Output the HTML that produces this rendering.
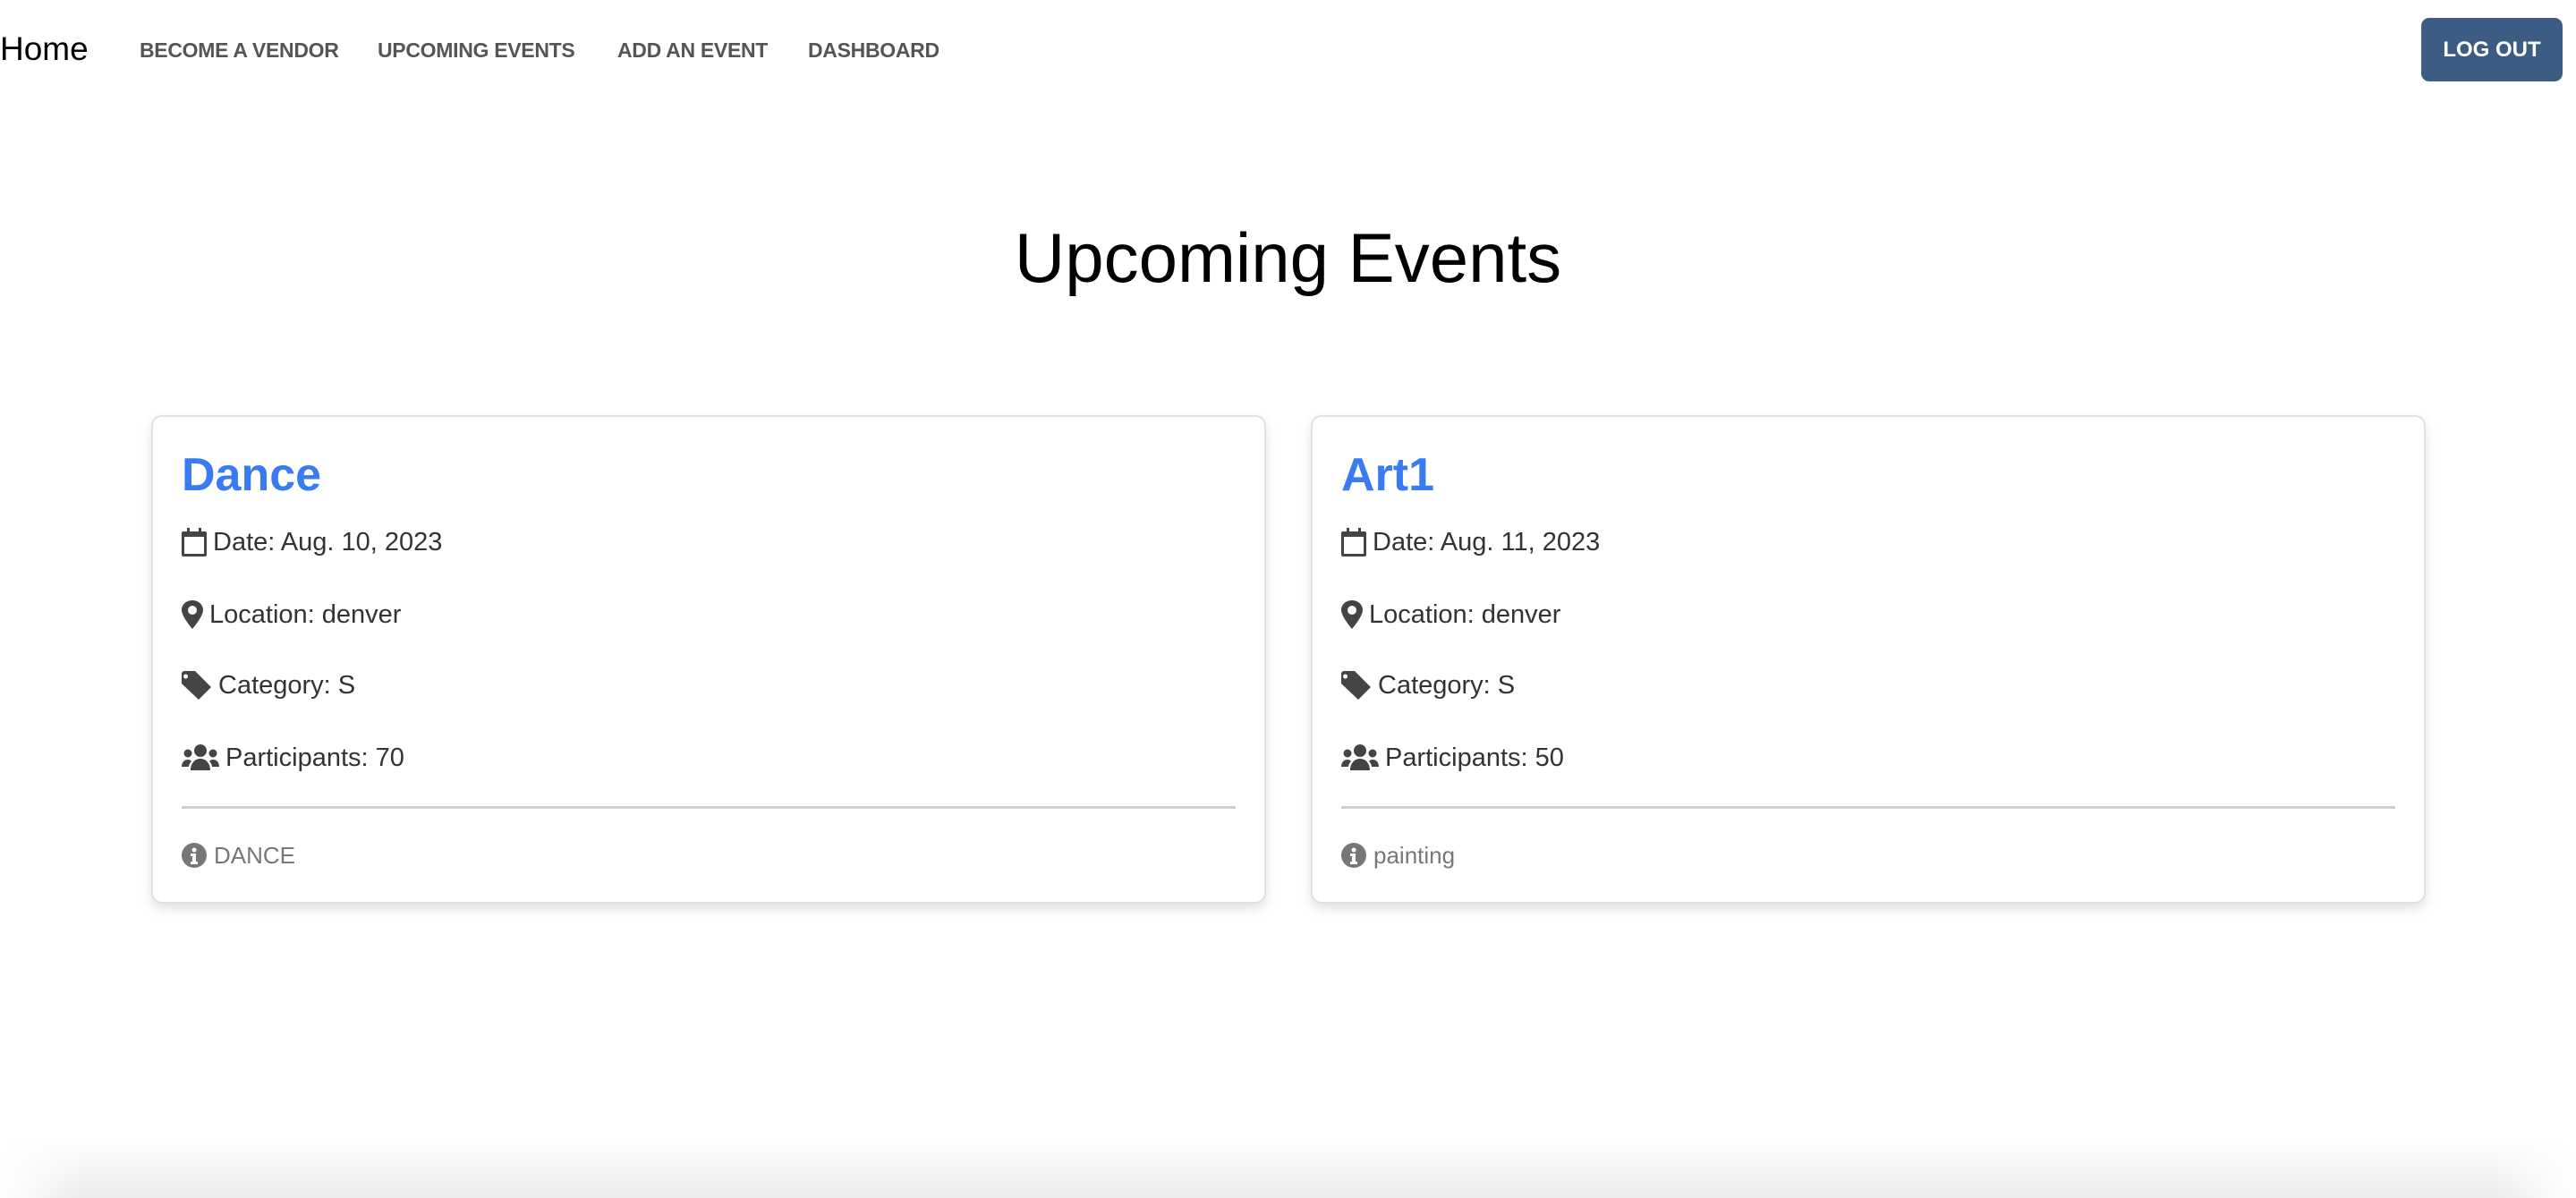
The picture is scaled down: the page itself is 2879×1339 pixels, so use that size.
<!DOCTYPE html>
<html><head><meta charset="utf-8"><style>
*{margin:0;padding:0;box-sizing:border-box}
html,body{width:2879px;height:1339px;overflow:hidden;background:#fff;font-family:"Liberation Sans",Arial,sans-serif}
#wrap{position:relative;width:2879px;height:1339px;overflow:hidden}
.abs{position:absolute;white-space:nowrap}
.home{left:0;top:34px;font-size:37px;color:#000;line-height:42px}
.nav{top:42px;font-size:23px;font-weight:bold;color:#555;line-height:28px;letter-spacing:-0.3px}
.btn{left:2706px;top:20px;width:158px;height:71px;background:#3d5c84;border-radius:9px;color:#fff;font-weight:bold;font-size:24px;line-height:71px;text-align:center}
h1{position:absolute;left:0;width:2879px;text-align:center;top:238px;font-size:78px;font-weight:normal;color:#000;line-height:100px}
.card{position:absolute;top:464px;width:1246px;height:546px;border:2px solid #e2e0da;border-radius:12px;box-shadow:0 6px 12px rgba(0,0,0,.12);background:#fff}
.t{position:absolute;left:32px;top:34px;font-size:52px;font-weight:bold;color:#3a7bf1;line-height:62px}
.row{position:absolute;left:32px;font-size:29px;color:#333;line-height:36px;display:flex;align-items:center}
.row svg{margin-right:7px;fill:#444}
.hr{position:absolute;left:32px;right:32px;top:435px;height:3px;background:#cfcfcf}
.note{position:absolute;left:32px;top:474px;font-size:26px;color:#777;line-height:32px;display:flex;align-items:center}
.note svg{margin-right:8px}
.foot{position:absolute;left:0;width:2879px;top:1270px;height:69px;background:linear-gradient(to bottom,rgba(0,0,0,0),rgba(0,0,0,.075));-webkit-mask-image:linear-gradient(to right,transparent 0,#000 90px,#000 2789px,transparent 2879px);mask-image:linear-gradient(to right,transparent 0,#000 90px,#000 2789px,transparent 2879px)}
</style></head><body><div id="wrap">
<div class="abs home">Home</div>
<div class="abs nav" style="left:156px">BECOME A VENDOR</div>
<div class="abs nav" style="left:422px">UPCOMING EVENTS</div>
<div class="abs nav" style="left:690px">ADD AN EVENT</div>
<div class="abs nav" style="left:903px">DASHBOARD</div>
<div class="abs btn">LOG OUT</div>
<h1>Upcoming Events</h1>

<div class="card" style="left:169px">
<div class="t">Dance</div>
<div class="row" style="top:122px"><svg width="28" height="32" viewBox="0 0 28 32"><path d="M6 0h3v4h10V0h3v4h4a2 2 0 0 1 2 2v24a2 2 0 0 1-2 2H2a2 2 0 0 1-2-2V6a2 2 0 0 1 2-2h4zM3 10v19h22V10z"/></svg>Date: Aug. 10, 2023</div>
<div class="row" style="top:203px"><svg width="24" height="32" viewBox="0 0 24 32"><path d="M12 0C5 0 0 5 0 11c0 7 12 21 12 21s12-14 12-21C24 5 19 0 12 0zm0 6a5 5 0 1 1 0 10 5 5 0 0 1 0-10z"/></svg>Location: denver</div>
<div class="row" style="top:282px"><svg width="34" height="32" viewBox="0 0 34 32"><path d="M0 3a3 3 0 0 1 3-3h12l18 18-14 14L0 14zm7 3a2.5 2.5 0 1 0 0 .1z"/></svg>Category: S</div>
<div class="row" style="top:363px"><svg width="42" height="32" viewBox="0 0 42 32"><circle cx="21" cy="8" r="7"/><circle cx="7" cy="11" r="4.5"/><circle cx="35" cy="11" r="4.5"/><path d="M10 30c0-8 5-13 11-13s11 5 11 13zM0 26c0-5 3-8 7-8 2 0 3 1 4 2-2 2-3 4-3 6zM42 26c0-5-3-8-7-8-2 0-3 1-4 2 2 2 3 4 3 6z"/></svg>Participants: 70</div>
<div class="hr"></div>
<div class="note"><svg width="28" height="28" viewBox="0 0 28 28"><circle cx="14" cy="14" r="14" fill="#777"/><circle cx="14" cy="8" r="2.5" fill="#fff"/><path d="M10 12h6v9h2v3h-8v-3h2v-6h-2z" fill="#fff"/></svg>DANCE</div>
</div>

<div class="card" style="left:1465px">
<div class="t">Art1</div>
<div class="row" style="top:122px"><svg width="28" height="32" viewBox="0 0 28 32"><path d="M6 0h3v4h10V0h3v4h4a2 2 0 0 1 2 2v24a2 2 0 0 1-2 2H2a2 2 0 0 1-2-2V6a2 2 0 0 1 2-2h4zM3 10v19h22V10z"/></svg>Date: Aug. 11, 2023</div>
<div class="row" style="top:203px"><svg width="24" height="32" viewBox="0 0 24 32"><path d="M12 0C5 0 0 5 0 11c0 7 12 21 12 21s12-14 12-21C24 5 19 0 12 0zm0 6a5 5 0 1 1 0 10 5 5 0 0 1 0-10z"/></svg>Location: denver</div>
<div class="row" style="top:282px"><svg width="34" height="32" viewBox="0 0 34 32"><path d="M0 3a3 3 0 0 1 3-3h12l18 18-14 14L0 14zm7 3a2.5 2.5 0 1 0 0 .1z"/></svg>Category: S</div>
<div class="row" style="top:363px"><svg width="42" height="32" viewBox="0 0 42 32"><circle cx="21" cy="8" r="7"/><circle cx="7" cy="11" r="4.5"/><circle cx="35" cy="11" r="4.5"/><path d="M10 30c0-8 5-13 11-13s11 5 11 13zM0 26c0-5 3-8 7-8 2 0 3 1 4 2-2 2-3 4-3 6zM42 26c0-5-3-8-7-8-2 0-3 1-4 2 2 2 3 4 3 6z"/></svg>Participants: 50</div>
<div class="hr"></div>
<div class="note"><svg width="28" height="28" viewBox="0 0 28 28"><circle cx="14" cy="14" r="14" fill="#777"/><circle cx="14" cy="8" r="2.5" fill="#fff"/><path d="M10 12h6v9h2v3h-8v-3h2v-6h-2z" fill="#fff"/></svg>painting</div>
</div>

<div class="foot"></div>
</div></body></html>
